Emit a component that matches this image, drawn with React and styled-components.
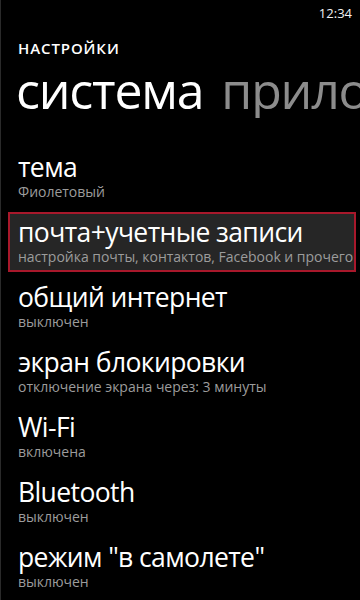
import styled, { createGlobalStyle } from 'styled-components';

const GlobalStyle = createGlobalStyle`
  html, body {
    margin: 0;
    padding: 0;
    background: #000;
  }
  body {
    font-family: "Open Sans", "Noto Sans", sans-serif;
    color: #fff;
  }
`;

const Screen = styled.div`
  width: 360px;
  height: 600px;
  overflow: hidden;
  background: #000;
  box-shadow: inset 1px 0 0 #2a2a2a;
  display: flex;
  flex-direction: column;
`;

const StatusBar = styled.div`
  height: 26px;
  line-height: 26px;
  font-size: 13px;
  text-align: right;
  padding-right: 8px;
  color: #f2f2f2;
`;

const AppTitle = styled.div`
  padding: 12px 0 0 18px;
  font-size: 15px;
  line-height: 20px;
  font-weight: 600;
  letter-spacing: 0.9px;
`;

const Pivot = styled.div`
  margin-top: 4px;
  padding-left: 16px;
  font-size: 50px;
  line-height: 56px;
  letter-spacing: -1.2px;
  white-space: nowrap;
  overflow: hidden;
`;

const PivotItem = styled.span`
  color: ${p => (p.active ? '#fff' : '#8c8c8c')};
  margin-right: 18px;
`;

const List = styled.div`
  margin-top: 29px;
  display: flex;
  flex-direction: column;
  gap: 5px;
`;

const Row = styled.div`
  height: 60px;
  box-sizing: border-box;
  margin: 0 4px 0 8px;
  padding: 1.5px 0 0 8px;
  border: 2px solid ${p => (p.selected ? '#a8182b' : 'transparent')};
  background: ${p => (p.selected ? '#262626' : 'transparent')};
  white-space: nowrap;
  overflow: hidden;
`;

const Title = styled.div`
  font-size: 26.5px;
  line-height: 32px;
  letter-spacing: -0.6px;
  color: #fff;
`;

const Subtitle = styled.div`
  font-size: 14px;
  line-height: 18px;
  letter-spacing: -0.02px;
  color: #9c9c9c;
`;

const items = [
  { title: 'тема', sub: 'Фиолетовый' },
  { title: 'почта+учетные записи', sub: 'настройка почты, контактов, Facebook и прочего', selected: true },
  { title: 'общий интернет', sub: 'выключен' },
  { title: 'экран блокировки', sub: 'отключение экрана через: 3 минуты' },
  { title: 'Wi-Fi', sub: 'включена' },
  { title: 'Bluetooth', sub: 'выключен' },
  { title: 'режим "в самолете"', sub: 'выключен' },
];

export default function App() {
  return (
    <>
      <GlobalStyle />
      <Screen>
        <StatusBar>12:34</StatusBar>
        <AppTitle>НАСТРОЙКИ</AppTitle>
        <Pivot>
          <PivotItem active>система</PivotItem>
          <PivotItem>приложения</PivotItem>
        </Pivot>
        <List>
          {items.map(it => (
            <Row key={it.title} selected={it.selected}>
              <Title>{it.title}</Title>
              <Subtitle>{it.sub}</Subtitle>
            </Row>
          ))}
        </List>
      </Screen>
    </>
  );
}
